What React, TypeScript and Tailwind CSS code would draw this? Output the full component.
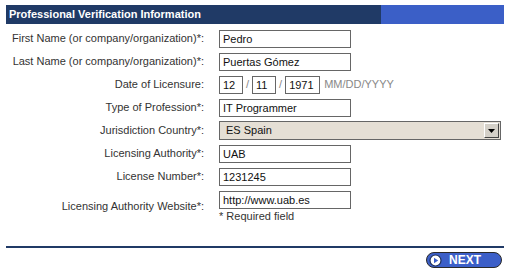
type Field = {
  label: string;
  value: string;
  width: number;
};

const fieldsTop: Field[] = [
  { label: "First Name (or company/organization)*:", value: "Pedro", width: 132 },
  { label: "Last Name (or company/organization)*:", value: "Puertas Gómez", width: 132 },
];

const fieldsBottom: Field[] = [
  { label: "Licensing Authority*:", value: "UAB", width: 132 },
  { label: "License Number*:", value: "1231245", width: 132 },
];

function TextBox({ value, width }: { value: string; width: number }) {
  return (
    <input
      readOnly
      value={value}
      style={{ width }}
      className="h-[18px] border border-[#666] bg-white px-[3px] text-[11px] text-[#111] outline-none"
    />
  );
}

function Row({ label, children }: { label: string; children: React.ReactNode }) {
  return (
    <div className="flex h-[23px] items-center">
      <div className="w-[198px] text-right text-[#333]">{label}</div>
      <div className="ml-[15px] flex items-center">{children}</div>
    </div>
  );
}

function NextButton() {
  return (
    <button className="flex h-[16px] w-[76px] items-center rounded-full border border-[#2a2a2a] bg-[#3c5fc8] pl-[2px] text-[12px] font-bold leading-none text-white">
      <svg width="13" height="13" viewBox="0 0 13 13">
        <circle cx="6.5" cy="6.5" r="5.5" fill="#fff" stroke="#1d2f5c" strokeWidth="1.2" />
        <path d="M5 3.8 L9.2 6.5 L5 9.2 Z" fill="#3c5fc8" />
      </svg>
      <span className="ml-[7px]">NEXT</span>
    </button>
  );
}

export default function App() {
  return (
    <div
      className="h-[272px] w-[510px] bg-white text-[11px]"
      style={{ fontFamily: '"Liberation Sans", Arial, sans-serif' }}
    >
      <div className="flex px-[6px] pt-[5px]">
        <div className="flex h-[19px] w-[375px] items-center bg-[#203a66] pl-[3px] font-bold text-white">
          Professional Verification Information
        </div>
        <div className="h-[19px] flex-1 bg-[#3b5fc7]" />
      </div>

      <div className="mt-[3px] px-[6px]">
        {fieldsTop.map((f) => (
          <Row key={f.label} label={f.label}>
            <TextBox value={f.value} width={f.width} />
          </Row>
        ))}
        <Row label="Date of Licensure:">
          <TextBox value="12" width={24} />
          <span className="mx-[3px] text-[#888]">/</span>
          <TextBox value="11" width={24} />
          <span className="mx-[3px] text-[#888]">/</span>
          <TextBox value="1971" width={35} />
          <span className="ml-[4px] text-[#888]">MM/DD/YYYY</span>
        </Row>
        <Row label="Type of Profession*:">
          <TextBox value="IT Programmer" width={132} />
        </Row>
        <Row label="Jurisdiction Country*:">
          <div className="flex h-[19px] w-[282px] items-center border border-[#666] bg-[#e5dfd5]">
            <span className="flex-1 pl-[6px] text-[#111]">ES Spain</span>
            <div className="mr-[1px] flex h-[15px] w-[15px] items-center justify-center border border-t-white border-l-white border-r-[#444] border-b-[#444] bg-[#d4d0c8]">
              <svg width="7" height="4" viewBox="0 0 7 4">
                <path d="M0 0 H7 L3.5 4 Z" fill="#000" />
              </svg>
            </div>
          </div>
        </Row>
        {fieldsBottom.map((f) => (
          <Row key={f.label} label={f.label}>
            <TextBox value={f.value} width={f.width} />
          </Row>
        ))}
        <div className="flex h-[36px] items-center">
          <div className="w-[198px] pt-[1px] text-right text-[#333]">Licensing Authority Website*:</div>
          <div className="ml-[15px] flex flex-col self-start pt-[3px]">
            <TextBox value="http://www.uab.es" width={132} />
            <span className="mt-[1px] leading-[13px] text-[#333]">* Required field</span>
          </div>
        </div>
      </div>

      <div className="mx-[6px] mt-[22px] h-[2px] bg-[#203a66]" />
      <div className="mx-[6px] mt-[4px] flex justify-end pr-[2px]">
        <NextButton />
      </div>
    </div>
  );
}
